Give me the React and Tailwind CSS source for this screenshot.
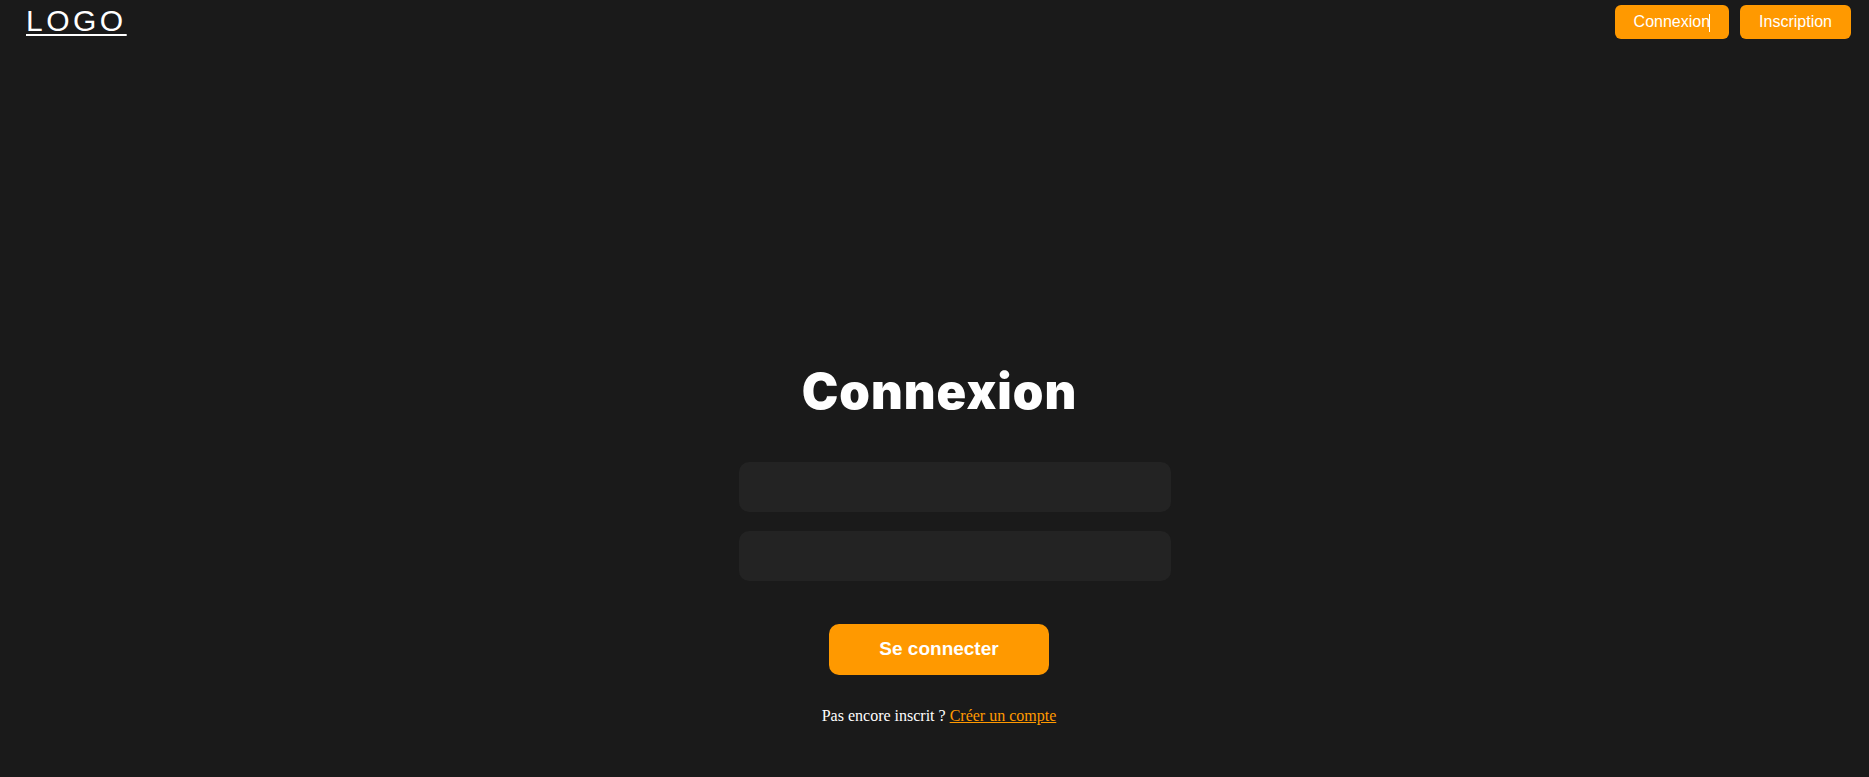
import React from 'react';

const sans = { fontFamily: '"Liberation Sans", Arial, sans-serif' };

export default function App() {
  return (
    <div className="min-h-screen w-full bg-[#1a1a1a] text-white font-['Liberation_Sans',Arial,sans-serif]">
      {/* Header */}
      <header className="flex h-[44px] items-start justify-between pl-[26px] pr-[18px]">
        <a href="#" className="mt-[3px] text-[30px] leading-[36px] tracking-[3.5px] text-white underline decoration-2 underline-offset-[3px]">
          LOGO
        </a>
        <nav className="mt-[5px] flex gap-[11px]">
          <button className="relative h-[34px] rounded-[6px] bg-[#ff9900] px-[19px] text-[16px] text-white">
            Connexion
            <span className="absolute right-[19px] top-[9px] h-[18px] w-px bg-white" />
          </button>
          <button className="h-[34px] rounded-[6px] bg-[#ff9900] px-[19px] text-[16px] text-white">
            Inscription
          </button>
        </nav>
      </header>

      {/* Form */}
      <main className="flex w-full flex-col items-center pl-[9px]">
        <h1 className="mt-[325px] pl-[1px] font-['Inter',sans-serif] text-[49px] font-black leading-[46px] tracking-[1px] text-white">
          Connexion
        </h1>
        <form className="mt-[47px] flex w-[400px] flex-col items-start gap-[19px]" onSubmit={(e) => e.preventDefault()}>
          <input type="email" className="h-[50px] w-[432px] rounded-[10px] bg-[#232323] px-4 text-white outline-none" />
          <input type="password" className="h-[50px] w-[432px] rounded-[10px] bg-[#232323] px-4 text-white outline-none" />
          <button type="submit" className="mt-[24px] h-[51px] w-[220px] self-center rounded-[10px] bg-[#ff9900] text-[19px] font-bold text-white" style={sans}>
            Se connecter
          </button>
        </form>
        <p className="mt-[32px] font-['Liberation_Serif','Times_New_Roman',serif] text-[16px] leading-[18px] text-white">
          Pas encore inscrit ? <a href="#" className="text-[#ff9900] underline">Créer un compte</a>
        </p>
      </main>
    </div>
  );
}
